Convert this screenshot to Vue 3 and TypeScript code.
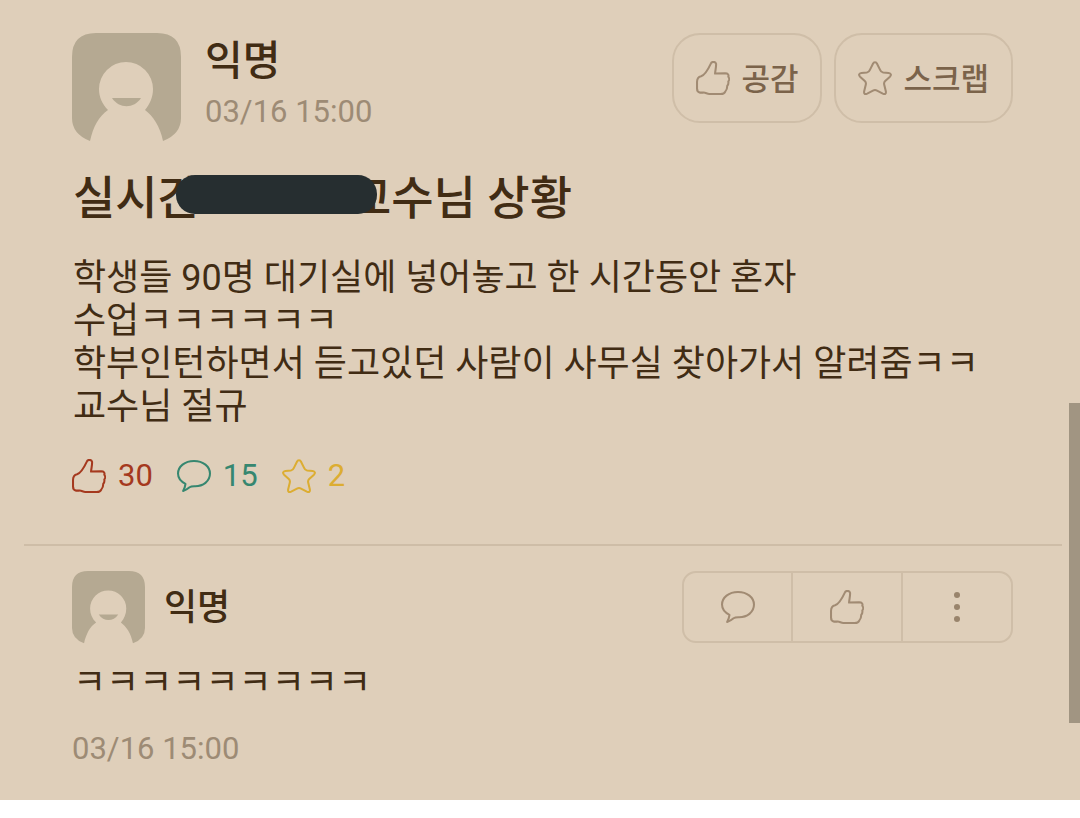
<script setup lang="ts">
import { h, type FunctionalComponent } from 'vue'

const paths = {
  thumb:
    'M44 7C46 1 57 1 59 8C60 15 57 26 56 37L86 36C94 36 97 41 95 46C98 50 98 57 95 60C96 66 94 71 92 73C92 81 89 87 86 90C84 96 79 97 73 97L39 97C32 97 28 92 21 93L12 93C5 92 3 88 3 81L3 62C3 52 6 47 15 45C27 41 37 22 44 7Z',
  bubble:
    'M25 73C10 66 3 55 3 43C3 22 23 6 50 6C77 6 97 22 97 43C97 65 77 81 51 80C45 80 41 80 37 83C31 88 25 92 18 94C22 87 24 81 25 73Z',
  star:
    'M44 8C46 2 54 2 56 8L65 26C67 31 69 33 74 34L90 35C97 36 99 41 94 46L80 59C77 62 76 65 77 69L82 90C83 97 79 99 73 96L56 87C52 85 48 85 44 87L27 96C21 99 17 97 18 90L23 69C24 65 23 62 20 59L6 46C1 41 3 36 10 35L26 34C31 33 33 31 35 26Z',
}
type IconName = keyof typeof paths

const Icon: FunctionalComponent<{ name: IconName }> = (props) =>
  h('svg', { class: 'icon', viewBox: '0 0 100 100', 'aria-hidden': 'true' }, [
    h('path', { d: paths[props.name] }),
  ])
Icon.props = ['name']

const Avatar: FunctionalComponent = () =>
  h('svg', { class: 'avatar', viewBox: '0 0 109 109', 'aria-hidden': 'true' }, [
    h('path', {
      class: 'avatar-bg',
      d: 'M24 0H85Q109 0 109 24V85Q109 101 91 108C88 93 81 83 73 77C78 71 81 64 81 56A27 27 0 0 0 27 56C27 64 30 71 36 77C27 83 21 94 18 108Q0 101 0 85V24Q0 0 24 0Z',
    }),
    h('path', { class: 'avatar-bg', d: 'M40 65H69C62 76 47 76 40 65Z' }),
  ])

const stats: { icon: IconName; count: number; label: string }[] = [
  { icon: 'thumb', count: 30, label: '공감' },
  { icon: 'bubble', count: 15, label: '댓글' },
  { icon: 'star', count: 2, label: '스크랩' },
]
const lines: string[] = [
  '학생들 90명 대기실에 넣어놓고 한 시간동안 혼자',
  '수업ㅋㅋㅋㅋㅋㅋ',
  '학부인턴하면서 듣고있던 사람이 사무실 찾아가서 알려줌ㅋㅋ',
  '교수님 절규',
]
</script>

<template>
  <main class="page">
    <article class="post">
      <header class="head">
        <Avatar />
        <div class="who">
          <div class="name">익명</div>
          <time class="date">03/16 15:00</time>
        </div>
        <div class="buttons">
          <button type="button" class="pill"><Icon name="thumb" /><span>공감</span></button>
          <button type="button" class="pill"><Icon name="star" /><span>스크랩</span></button>
        </div>
      </header>
      <h1 class="title">실시간<span class="mask"></span>교수님 상황</h1>
      <p class="body">
        <template v-for="(line, i) in lines" :key="i"><br v-if="i > 0" />{{ line }}</template>
      </p>
      <ul class="stats">
        <li v-for="s in stats" :key="s.icon" :class="s.icon" :aria-label="s.label">
          <Icon :name="s.icon" />{{ s.count }}
        </li>
      </ul>
    </article>
    <hr class="rule" />
    <section class="comment">
      <header class="comment-head">
        <Avatar />
        <div class="name">익명</div>
        <div class="actions">
          <button type="button" aria-label="대댓글"><Icon name="bubble" /></button>
          <button type="button" aria-label="공감"><Icon name="thumb" /></button>
          <button type="button" aria-label="더보기">
            <svg class="dots" viewBox="0 0 8 32" aria-hidden="true">
              <circle cx="4" cy="4" r="3" />
              <circle cx="4" cy="16" r="3" />
              <circle cx="4" cy="28" r="3" />
            </svg>
          </button>
        </div>
      </header>
      <p class="body">ㅋㅋㅋㅋㅋㅋㅋㅋㅋ</p>
      <time class="date">03/16 15:00</time>
    </section>
    <div class="scroll-thumb"></div>
  </main>
</template>

<style>
body {
  margin: 0;
  background: #fff;
}
</style>

<style scoped>
.page {
  position: relative;
  background: #dfcfba;
  color: #412c14;
  font-family: Roboto, 'Noto Sans CJK KR', sans-serif;
  box-sizing: border-box;
  padding-bottom: 30px;
}
.post,
.comment {
  padding: 33px 67px 0 72px;
}
.head,
.comment-head {
  display: flex;
  align-items: flex-start;
}
.avatar {
  display: block;
  width: 109px;
  height: 109px;
  flex: none;
}
:deep(.avatar-bg) {
  fill: #b5a992;
}
.who {
  margin-left: 24px;
}
.name {
  font-size: 41px;
  line-height: 57px;
  font-weight: 500;
}
.date {
  display: block;
  font-size: 31px;
  line-height: 43px;
  color: #9d8b75;
}
.buttons {
  display: flex;
  gap: 12px;
  margin-left: auto;
}
button {
  font: inherit;
  color: inherit;
  background: none;
  border: 0;
  padding: 0;
  cursor: pointer;
}
.pill {
  display: flex;
  align-items: center;
  gap: 11px;
  height: 90px;
  padding: 0 22px;
  border: 2px solid #cfbea8;
  border-radius: 28px;
  font-size: 31px;
  font-weight: 500;
  color: #7b634a;
}
.pill span {
  padding-bottom: 4px;
}
.icon {
  display: block;
  width: 34px;
  height: 34px;
  flex: none;
  fill: none;
  stroke: #a18b73;
  stroke-width: 6;
  stroke-linejoin: round;
}
.title {
  margin: 23px 0 0 1px;
  font-size: 46px;
  line-height: 66px;
  font-weight: 500;
}
.mask {
  display: inline-block;
  position: relative;
  width: 149px;
}
.mask::after {
  content: '';
  position: absolute;
  left: -24px;
  right: -28px;
  bottom: 0;
  height: 39px;
  border-radius: 19px;
  background: #262e30;
}
.body {
  margin: 26px 0 0 1px;
  font-size: 36px;
  line-height: 43px;
}
.stats {
  display: flex;
  gap: 24px;
  margin: 25px 0 0;
  padding: 0;
  list-style: none;
  font-size: 31px;
  line-height: 44px;
}
.stats li {
  display: flex;
  align-items: center;
  gap: 12px;
}
.stats .thumb {
  color: #a5391e;
}
.stats .bubble {
  color: #368770;
}
.stats .star {
  color: #dcad32;
}
.stats .icon {
  stroke: currentColor;
}
.rule {
  margin: 46px 18px 0 24px;
  border: 0;
  height: 2px;
  background: #cebda7;
}
.comment {
  padding-top: 25px;
}
.comment .avatar {
  width: 73px;
  height: 73px;
}
.comment .name {
  margin-left: 19px;
  font-size: 36px;
  line-height: 74px;
}
.actions {
  display: flex;
  margin-left: auto;
  border: 2px solid #cfbea8;
  border-radius: 14px;
}
.actions button {
  display: flex;
  align-items: center;
  justify-content: center;
  width: 107px;
  height: 68px;
}
.actions button + button {
  border-left: 2px solid #cfbea8;
  width: 110px;
}
.dots {
  width: 8px;
  height: 32px;
  fill: #99846c;
}
.comment .body {
  margin-top: 17px;
}
.comment .date {
  margin-top: 22px;
}
.scroll-thumb {
  position: absolute;
  right: 0;
  top: 403px;
  width: 11px;
  height: 320px;
  background: #a19582;
}
</style>
